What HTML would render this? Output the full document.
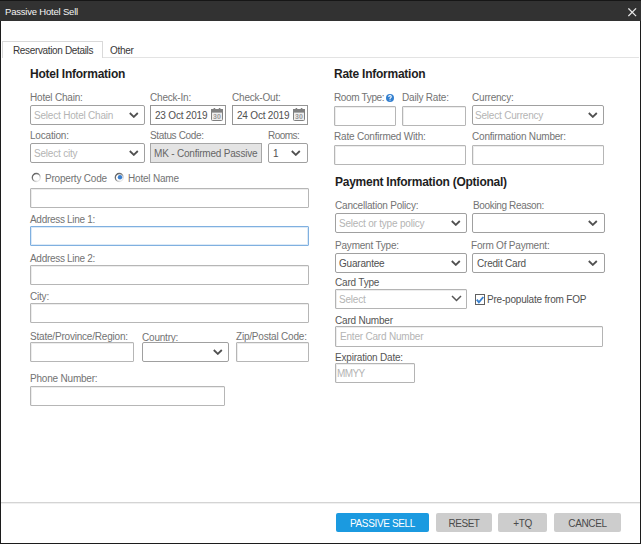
<!DOCTYPE html>
<html><head><meta charset="utf-8">
<style>
*{box-sizing:border-box;margin:0;padding:0}
html,body{width:641px;height:544px;overflow:hidden;background:#fff}
body{position:relative;font-family:"Liberation Sans",sans-serif;font-size:10px;color:#666}
.a{position:absolute}
.win{left:0;top:0;width:641px;height:544px;border:1px solid #1c1c1c;border-top:0}
.title{left:0;top:0;width:641px;height:21px;background:#323232;border-top:1px solid #161616}
.ttext{left:5px;top:6px;color:#f4f4f4;font-size:9.5px;letter-spacing:-0.2px;line-height:12px}
.close{left:628px;top:8px;width:8.5px;height:8.5px}
.tab{left:2px;top:41px;width:101px;height:17px;border:1px solid #d9d9d9;border-bottom:0;background:#fff}
.tabline{left:102px;top:57px;width:537px;height:1px;background:#e3e3e3}
.t{position:absolute;white-space:nowrap;line-height:10px}
.lbl{font-size:10px;letter-spacing:-0.2px;color:#737373}
.hdr{font-size:12px;font-weight:bold;color:#1e1e1e;letter-spacing:-0.25px;line-height:12px}
.box{position:absolute;border:1px solid #b6b6b6;border-radius:1px;background:#fff;box-shadow:inset 1px 1px 0 #ededed}
.sel{position:absolute;border:1px solid #a0a0a0;border-radius:2px;background:#fff}
.ph{color:#b4b4b4}
.val{color:#505050}
.chev{position:absolute;width:10px;height:6px}
.btn{position:absolute;top:513px;height:19px;background:#cdcdcd;border-radius:2px;color:#4a4a4a;font-size:10px;letter-spacing:-0.35px;text-align:center;line-height:21px}
</style></head><body>
<div class="a win"></div>
<div class="a title"></div>
<div class="a ttext">Passive Hotel Sell</div>
<svg class="a close" viewBox="0 0 8.5 8.5"><path d="M0.4 0.4L8.1 8.1M8.1 0.4L0.4 8.1" stroke="#e6e6e6" stroke-width="1.25"/></svg>

<div class="a tabline"></div>
<div class="a tab"></div>
<div class="t lbl" style="left:13px;top:46px;color:#383838;font-size:10px;letter-spacing:-0.35px">Reservation Details</div>
<div class="t lbl" style="left:110px;top:46px;color:#383838;letter-spacing:-0.3px">Other</div>

<!-- Hotel information -->
<div class="t hdr" style="left:30px;top:68px">Hotel Information</div>

<div class="t lbl" style="left:30px;top:93px">Hotel Chain:</div>
<div class="sel" style="left:30px;top:105px;width:115px;height:20px"></div>
<div class="t lbl ph" style="left:34px;top:111px">Select Hotel Chain</div>
<svg class="chev" style="left:129px;top:112px" viewBox="0 0 10 6"><path d="M0.8 1L4.8 4.9L8.8 1" fill="none" stroke="#505050" stroke-width="1.8"/></svg>

<div class="t lbl" style="left:150px;top:93px">Check-In:</div>
<div class="box" style="left:150px;top:105px;width:76px;height:20px;border-color:#959595;box-shadow:none;border-radius:0"></div>
<div class="t lbl val" style="left:155px;top:111px">23 Oct 2019</div>
<svg class="a" style="left:211px;top:108px;width:12px;height:13px" viewBox="0 0 12 13"><rect x="0.5" y="1.5" width="11" height="11" rx="1" fill="#eee" stroke="#808080"/><rect x="0" y="1" width="12" height="3.6" fill="#808080"/><rect x="2.6" y="0" width="1.6" height="2" fill="#808080"/><rect x="7.8" y="0" width="1.6" height="2" fill="#808080"/><text x="6" y="11.2" font-family="Liberation Sans" font-size="7" font-weight="bold" fill="#999" text-anchor="middle">30</text></svg>

<div class="t lbl" style="left:232px;top:93px">Check-Out:</div>
<div class="box" style="left:232px;top:105px;width:76px;height:20px;border-color:#959595;box-shadow:none;border-radius:0"></div>
<div class="t lbl val" style="left:237px;top:111px">24 Oct 2019</div>
<svg class="a" style="left:293px;top:108px;width:12px;height:13px" viewBox="0 0 12 13"><rect x="0.5" y="1.5" width="11" height="11" rx="1" fill="#eee" stroke="#808080"/><rect x="0" y="1" width="12" height="3.6" fill="#808080"/><rect x="2.6" y="0" width="1.6" height="2" fill="#808080"/><rect x="7.8" y="0" width="1.6" height="2" fill="#808080"/><text x="6" y="11.2" font-family="Liberation Sans" font-size="7" font-weight="bold" fill="#999" text-anchor="middle">30</text></svg>

<div class="t lbl" style="left:30px;top:131px">Location:</div>
<div class="sel" style="left:30px;top:143px;width:115px;height:20px"></div>
<div class="t lbl ph" style="left:34px;top:149px">Select city</div>
<svg class="chev" style="left:129px;top:150px" viewBox="0 0 10 6"><path d="M0.8 1L4.8 4.9L8.8 1" fill="none" stroke="#505050" stroke-width="1.8"/></svg>

<div class="t lbl" style="left:150px;top:131px;letter-spacing:-0.35px">Status Code:</div>
<div class="box" style="left:150px;top:143px;width:112px;height:20px;background:#e4e4e4;border-color:#a6a6a6;box-shadow:none;border-radius:0"></div>
<div class="t lbl val" style="left:154px;top:149px;color:#666">MK - Confirmed Passive</div>

<div class="t lbl" style="left:268px;top:131px;letter-spacing:-0.55px">Rooms:</div>
<div class="sel" style="left:268px;top:143px;width:40px;height:20px"></div>
<div class="t lbl val" style="left:273px;top:149px">1</div>
<svg class="chev" style="left:291px;top:150px" viewBox="0 0 10 6"><path d="M0.8 1L4.8 4.9L8.8 1" fill="none" stroke="#505050" stroke-width="1.8"/></svg>

<!-- radios -->
<svg class="a" style="left:31px;top:172px;width:11px;height:11px" viewBox="0 0 11 11"><defs><linearGradient id="rg" x1="0" y1="0" x2="1" y2="1"><stop offset="0" stop-color="#555"/><stop offset="0.45" stop-color="#808080"/><stop offset="0.75" stop-color="#dadada"/><stop offset="1" stop-color="#fafafa"/></linearGradient></defs><circle cx="5.3" cy="5.5" r="4" fill="none" stroke="url(#rg)" stroke-width="1.3"/></svg>
<div class="t lbl" style="left:45px;top:174px">Property Code</div>
<svg class="a" style="left:114px;top:172px;width:11px;height:11px" viewBox="0 0 11 11"><circle cx="5.3" cy="5.5" r="4" fill="none" stroke="url(#rg)" stroke-width="1.3"/><circle cx="6" cy="5.3" r="2.2" fill="#3a7fcf"/></svg>
<div class="t lbl" style="left:128px;top:174px">Hotel Name</div>

<div class="box" style="left:30px;top:188px;width:279px;height:20px"></div>
<div class="t lbl" style="left:30px;top:215px;letter-spacing:-0.3px">Address Line 1:</div>
<div class="box" style="left:30px;top:226px;width:279px;height:20px;border-color:#80b0e0;box-shadow:inset 0 0 0 1px #dceaf7"></div>
<div class="t lbl" style="left:30px;top:254px;letter-spacing:-0.3px">Address Line 2:</div>
<div class="box" style="left:30px;top:265px;width:279px;height:20px"></div>
<div class="t lbl" style="left:30px;top:292px">City:</div>
<div class="box" style="left:30px;top:303px;width:279px;height:20px"></div>

<div class="t lbl" style="left:30px;top:332px">State/Province/Region:</div>
<div class="box" style="left:30px;top:342px;width:104px;height:20px"></div>
<div class="t lbl" style="left:142px;top:333px">Country:</div>
<div class="sel" style="left:142px;top:342px;width:87px;height:20px"></div>
<svg class="chev" style="left:213px;top:349px" viewBox="0 0 10 6"><path d="M0.8 1L4.8 4.9L8.8 1" fill="none" stroke="#505050" stroke-width="1.8"/></svg>
<div class="t lbl" style="left:236px;top:332px">Zip/Postal Code:</div>
<div class="box" style="left:236px;top:342px;width:73px;height:20px"></div>

<div class="t lbl" style="left:30px;top:374px">Phone Number:</div>
<div class="box" style="left:30px;top:386px;width:195px;height:20px"></div>

<!-- Rate information -->
<div class="t hdr" style="left:334px;top:68px">Rate Information</div>
<div class="t lbl" style="left:334px;top:93px;letter-spacing:-0.35px">Room Type:</div>
<div class="box" style="left:334px;top:106px;width:62px;height:20px"></div>
<svg class="a" style="left:386px;top:94px;width:8px;height:8px" viewBox="0 0 8 8"><circle cx="4" cy="4" r="4" fill="#3480d0"/><path d="M2.7 3Q2.7 1.6 4 1.6Q5.3 1.6 5.3 2.8Q5.3 3.5 4.4 3.9Q4 4.1 4 4.9" fill="none" stroke="#fff" stroke-width="1.05"/><rect x="3.5" y="5.6" width="1" height="1" fill="#fff"/></svg>
<div class="t lbl" style="left:402px;top:93px">Daily Rate:</div>
<div class="box" style="left:402px;top:106px;width:64px;height:20px"></div>
<div class="t lbl" style="left:472px;top:93px">Currency:</div>
<div class="sel" style="left:472px;top:105px;width:132px;height:20px"></div>
<div class="t lbl ph" style="left:475px;top:111px">Select Currency</div>
<svg class="chev" style="left:588px;top:112px" viewBox="0 0 10 6"><path d="M0.8 1L4.8 4.9L8.8 1" fill="none" stroke="#505050" stroke-width="1.8"/></svg>

<div class="t lbl" style="left:334px;top:132px">Rate Confirmed With:</div>
<div class="box" style="left:334px;top:145px;width:132px;height:20px"></div>
<div class="t lbl" style="left:472px;top:132px">Confirmation Number:</div>
<div class="box" style="left:472px;top:145px;width:132px;height:20px"></div>

<div class="t hdr" style="left:335px;top:176px">Payment Information (Optional)</div>
<div class="t lbl" style="left:335px;top:201px">Cancellation Policy:</div>
<div class="sel" style="left:335px;top:213px;width:132px;height:20px"></div>
<div class="t lbl ph" style="left:339px;top:219px">Select or type policy</div>
<svg class="chev" style="left:451px;top:220px" viewBox="0 0 10 6"><path d="M0.8 1L4.8 4.9L8.8 1" fill="none" stroke="#505050" stroke-width="1.8"/></svg>
<div class="t lbl" style="left:473px;top:201px;letter-spacing:-0.35px">Booking Reason:</div>
<div class="sel" style="left:472px;top:213px;width:133px;height:20px"></div>
<svg class="chev" style="left:588px;top:220px" viewBox="0 0 10 6"><path d="M0.8 1L4.8 4.9L8.8 1" fill="none" stroke="#505050" stroke-width="1.8"/></svg>

<div class="t lbl" style="left:335px;top:241px">Payment Type:</div>
<div class="sel" style="left:335px;top:253px;width:132px;height:20px"></div>
<div class="t lbl val" style="left:339px;top:259px">Guarantee</div>
<svg class="chev" style="left:451px;top:260px" viewBox="0 0 10 6"><path d="M0.8 1L4.8 4.9L8.8 1" fill="none" stroke="#505050" stroke-width="1.8"/></svg>
<div class="t lbl" style="left:471px;top:241px">Form Of Payment:</div>
<div class="sel" style="left:472px;top:253px;width:133px;height:20px"></div>
<div class="t lbl val" style="left:477px;top:259px">Credit Card</div>
<svg class="chev" style="left:588px;top:260px" viewBox="0 0 10 6"><path d="M0.8 1L4.8 4.9L8.8 1" fill="none" stroke="#505050" stroke-width="1.8"/></svg>

<div class="t lbl" style="left:335px;top:278px;color:#555">Card Type</div>
<div class="box" style="left:335px;top:289px;width:132px;height:20px;border-color:#b4b4b4"></div>
<div class="t lbl ph" style="left:339px;top:295px">Select</div>
<svg class="chev" style="left:451px;top:295px;width:11px;height:7px" viewBox="0 0 11 7"><path d="M1 1L5.5 5.5L10 1" fill="none" stroke="#555" stroke-width="1.5"/></svg>
<svg class="a" style="left:475px;top:294px;width:10px;height:11px" viewBox="0 0 10 11"><rect x="0.5" y="0.5" width="9" height="10" fill="#fff" stroke="#606060"/><path d="M1.8 5.6L3.9 8.3L8.3 3" fill="none" stroke="#3a82d0" stroke-width="1.9"/></svg>
<div class="t lbl" style="left:487px;top:295px;color:#505050">Pre-populate from FOP</div>

<div class="t lbl" style="left:335px;top:316px;color:#555">Card Number</div>
<div class="box" style="left:335px;top:326px;width:268px;height:21px;border-color:#b4b4b4"></div>
<div class="t lbl ph" style="left:340px;top:332px">Enter Card Number</div>

<div class="t lbl" style="left:335px;top:353px;color:#555">Expiration Date:</div>
<div class="box" style="left:335px;top:363px;width:80px;height:20px;border-color:#b4b4b4"></div>
<div class="t lbl ph" style="left:337px;top:369px;letter-spacing:-0.6px">MMYY</div>

<!-- footer -->
<div class="a" style="left:1px;top:502px;width:639px;height:1px;background:#d4d4d4;box-shadow:0 1px 0 #f0f0f0"></div>
<div class="btn" style="left:336px;width:93px;background:#1b9ae0;color:#fff">PASSIVE SELL</div>
<div class="btn" style="left:436px;width:56px;letter-spacing:-0.5px">RESET</div>
<div class="btn" style="left:498px;width:49px">+TQ</div>
<div class="btn" style="left:554px;width:67px">CANCEL</div>
</body></html>
